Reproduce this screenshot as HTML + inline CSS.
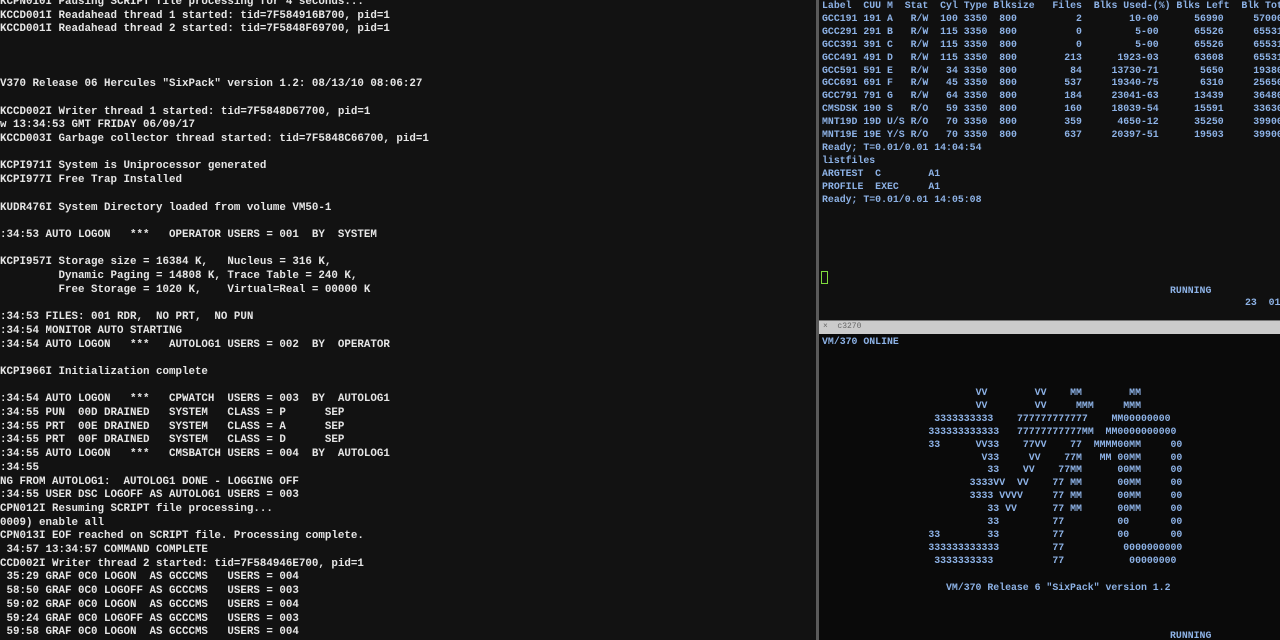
<!DOCTYPE html>
<html><head><meta charset="utf-8"><style>
html,body{margin:0;padding:0;width:1280px;height:640px;overflow:hidden;background:#111;}
.m{position:absolute;font-family:"Liberation Mono",monospace;white-space:pre;}
#left{left:0;top:0;width:816px;height:640px;background:#121212;overflow:hidden;}
#left .l{position:absolute;left:0;font-size:10.83px;color:#e6e6e6;line-height:13.7px;height:13.7px;font-weight:bold;}
#div{position:absolute;left:816px;top:0;width:3px;height:640px;background:#5a5a5a;}
#tr{position:absolute;left:819px;top:0;width:461px;height:320px;background:#101010;overflow:hidden;}
#sep{position:absolute;left:819px;top:320px;width:461px;height:14px;background:#cbcbcb;border-top:1px solid #777;box-sizing:border-box;}
#br{position:absolute;left:819px;top:334px;width:461px;height:306px;background:#0a0a0a;overflow:hidden;}
.b{position:absolute;font-family:"Liberation Mono",monospace;white-space:pre;font-size:9.85px;color:#8db2e6;line-height:12.9px;font-weight:bold;}
</style></head><body>
<div id="left" class="m">
<div class="l" style="top:-4px">KCPN010I Pausing SCRIPT file processing for 4 seconds...</div>
<div class="l" style="top:9.7px">KCCD001I Readahead thread 1 started: tid=7F584916B700, pid=1</div>
<div class="l" style="top:23.4px">KCCD001I Readahead thread 2 started: tid=7F5848F69700, pid=1</div>
<div class="l" style="top:78.2px">V370 Release 06 Hercules "SixPack" version 1.2: 08/13/10 08:06:27</div>
<div class="l" style="top:105.6px">KCCD002I Writer thread 1 started: tid=7F5848D67700, pid=1</div>
<div class="l" style="top:119.3px">w 13:34:53 GMT FRIDAY 06/09/17</div>
<div class="l" style="top:133px">KCCD003I Garbage collector thread started: tid=7F5848C66700, pid=1</div>
<div class="l" style="top:160.4px">KCPI971I System is Uniprocessor generated</div>
<div class="l" style="top:174.1px">KCPI977I Free Trap Installed</div>
<div class="l" style="top:201.5px">KUDR476I System Directory loaded from volume VM50-1</div>
<div class="l" style="top:228.9px">:34:53 AUTO LOGON   ***   OPERATOR USERS = 001  BY  SYSTEM</div>
<div class="l" style="top:256.3px">KCPI957I Storage size = 16384 K,   Nucleus = 316 K,</div>
<div class="l" style="top:270px">         Dynamic Paging = 14808 K, Trace Table = 240 K,</div>
<div class="l" style="top:283.7px">         Free Storage = 1020 K,    Virtual=Real = 00000 K</div>
<div class="l" style="top:311.1px">:34:53 FILES: 001 RDR,  NO PRT,  NO PUN</div>
<div class="l" style="top:324.8px">:34:54 MONITOR AUTO STARTING</div>
<div class="l" style="top:338.5px">:34:54 AUTO LOGON   ***   AUTOLOG1 USERS = 002  BY  OPERATOR</div>
<div class="l" style="top:365.9px">KCPI966I Initialization complete</div>
<div class="l" style="top:393.3px">:34:54 AUTO LOGON   ***   CPWATCH  USERS = 003  BY  AUTOLOG1</div>
<div class="l" style="top:407px">:34:55 PUN  00D DRAINED   SYSTEM   CLASS = P      SEP</div>
<div class="l" style="top:420.7px">:34:55 PRT  00E DRAINED   SYSTEM   CLASS = A      SEP</div>
<div class="l" style="top:434.4px">:34:55 PRT  00F DRAINED   SYSTEM   CLASS = D      SEP</div>
<div class="l" style="top:448.1px">:34:55 AUTO LOGON   ***   CMSBATCH USERS = 004  BY  AUTOLOG1</div>
<div class="l" style="top:461.8px">:34:55</div>
<div class="l" style="top:475.5px">NG FROM AUTOLOG1:  AUTOLOG1 DONE - LOGGING OFF</div>
<div class="l" style="top:489.2px">:34:55 USER DSC LOGOFF AS AUTOLOG1 USERS = 003</div>
<div class="l" style="top:502.9px">CPN012I Resuming SCRIPT file processing...</div>
<div class="l" style="top:516.6px">0009) enable all</div>
<div class="l" style="top:530.3px">CPN013I EOF reached on SCRIPT file. Processing complete.</div>
<div class="l" style="top:544px"> 34:57 13:34:57 COMMAND COMPLETE</div>
<div class="l" style="top:557.7px">CCD002I Writer thread 2 started: tid=7F584946E700, pid=1</div>
<div class="l" style="top:571.4px"> 35:29 GRAF 0C0 LOGON  AS GCCCMS   USERS = 004</div>
<div class="l" style="top:585.1px"> 58:50 GRAF 0C0 LOGOFF AS GCCCMS   USERS = 003</div>
<div class="l" style="top:598.8px"> 59:02 GRAF 0C0 LOGON  AS GCCCMS   USERS = 004</div>
<div class="l" style="top:612.5px"> 59:24 GRAF 0C0 LOGOFF AS GCCCMS   USERS = 003</div>
<div class="l" style="top:626.2px"> 59:58 GRAF 0C0 LOGON  AS GCCCMS   USERS = 004</div>
</div>
<div id="div"></div>
<div id="tr">
<div class="b" style="left:3px;top:0px">Label  CUU M  Stat  Cyl Type Blksize   Files  Blks Used-(%) Blks Left  Blk Total
GCC191 191 A   R/W  100 3350  800          2        10-00      56990     57000
GCC291 291 B   R/W  115 3350  800          0         5-00      65526     65531
GCC391 391 C   R/W  115 3350  800          0         5-00      65526     65531
GCC491 491 D   R/W  115 3350  800        213      1923-03      63608     65531
GCC591 591 E   R/W   34 3350  800         84     13730-71       5650     19380
GCC691 691 F   R/W   45 3350  800        537     19340-75       6310     25650
GCC791 791 G   R/W   64 3350  800        184     23041-63      13439     36480
CMSDSK 190 S   R/O   59 3350  800        160     18039-54      15591     33630
MNT19D 19D U/S R/O   70 3350  800        359      4650-12      35250     39900
MNT19E 19E Y/S R/O   70 3350  800        637     20397-51      19503     39900
Ready; T=0.01/0.01 14:04:54
listfiles
ARGTEST  C        A1
PROFILE  EXEC     A1
Ready; T=0.01/0.01 14:05:08</div>
<div style="position:absolute;left:2px;top:271px;width:5px;height:11px;border:1px solid #7fdc3c;"></div>
<div class="b" style="left:351px;top:285px">RUNNING</div>
<div class="b" style="left:426px;top:297px">23  01</div>
</div>
<div id="sep"><span class="m" style="position:absolute;left:4px;top:0px;font-size:8px;color:#666;line-height:12px;">×  c3270</span></div>
<div id="br">
<div class="b" style="left:3px;top:2px">VM/370 ONLINE</div>
<div class="b" style="left:3px;top:53px">                          VV        VV    MM        MM
                          VV        VV     MMM     MMM
                   3333333333    777777777777    MM00000000
                  333333333333   77777777777MM  MM0000000000
                  33      VV33    77VV    77  MMMM00MM     00
                           V33     VV    77M   MM 00MM     00
                            33    VV    77MM      00MM     00
                         3333VV  VV    77 MM      00MM     00
                         3333 VVVV     77 MM      00MM     00
                            33 VV      77 MM      00MM     00
                            33         77         00       00
                  33        33         77         00       00
                  333333333333         77          0000000000
                   3333333333          77           00000000</div>
<div class="b" style="left:127px;top:248px">VM/370 Release 6 "SixPack" version 1.2</div>
<div class="b" style="left:351px;top:296px">RUNNING</div>
</div>
</body></html>
